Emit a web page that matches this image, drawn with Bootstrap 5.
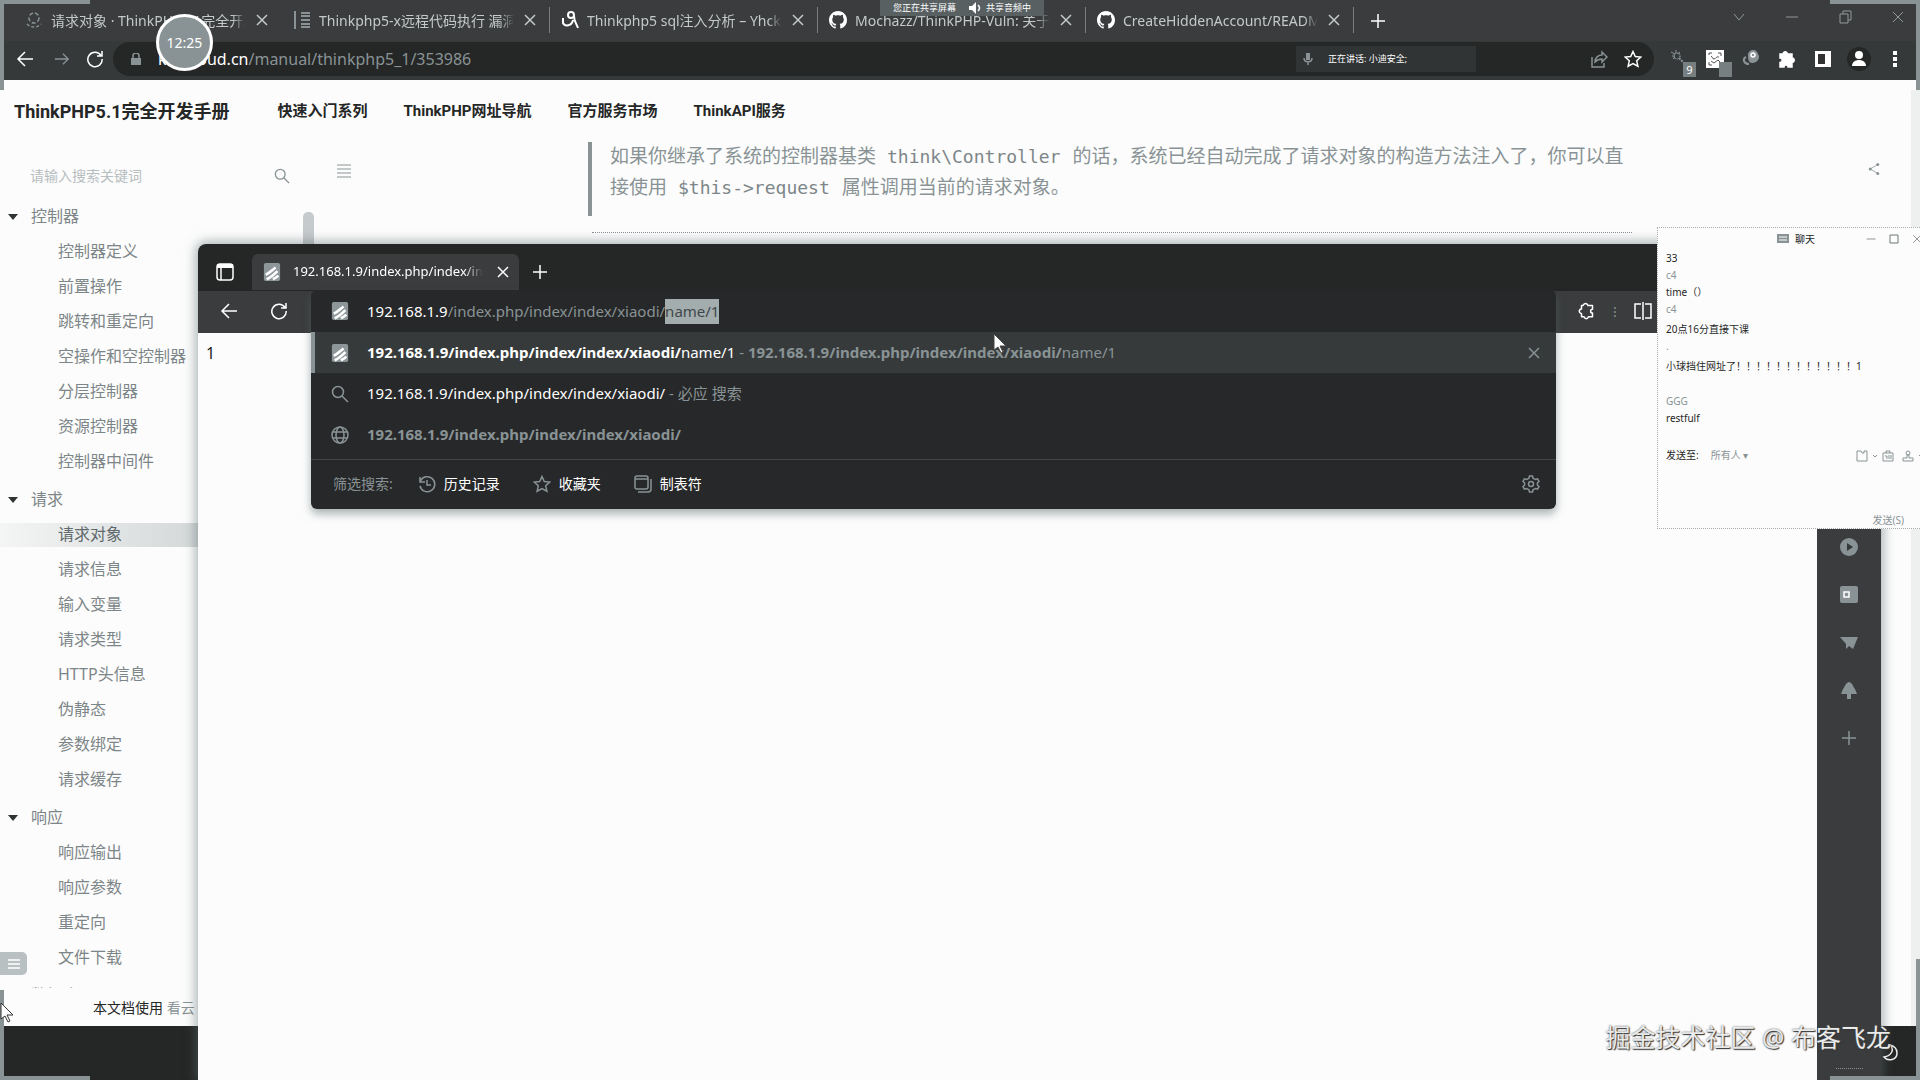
<!DOCTYPE html>
<html lang="zh-CN">
<head>
<meta charset="utf-8">
<meta name="viewport" content="width=device-width, initial-scale=1">
<title>请求对象 · ThinkPHP5.1完全开发手册</title>
<link href="https://cdn.jsdelivr.net/npm/bootstrap@5.3.0/dist/css/bootstrap.min.css" rel="stylesheet">
<style>
:root{--ink:#252626;--panel:#3a3c3d;--tone:#899395;--paper:#fcfcfc}
body{font-family:"Noto Sans","Noto Sans CJK SC",sans-serif;font-size:14px;color:var(--ink);background:var(--paper)}
svg{display:block;flex:none;fill:none;stroke:currentColor;stroke-width:1.5}
.solid{fill:currentColor;stroke:none}
.i12{width:12px;height:12px}.i16{width:16px;height:16px}.i18{width:18px;height:18px}.i20{width:20px;height:20px}
button.ico{background:none;border:0;padding:0;color:inherit;display:flex;align-items:center;justify-content:center;flex:none}
.dim,button.ico.dim{color:var(--tone)}
input.bare,textarea.bare,select.bare{border:0;outline:0;background:none;padding:0;border-radius:0;font:inherit;resize:none}
.desk{height:100vh;min-height:700px;overflow:hidden}
/* outer browser */
.tabstrip{height:41px;background:var(--panel);padding:0 14px 8px;color:#fff}
.btab{width:268px;height:26px;padding:0 11px;gap:8px;border-right:1px solid #777c7e;color:#c4c9ca}
.btab.noline{border-right-color:transparent}
.btab-title{width:196px;overflow:hidden;white-space:nowrap;-webkit-mask-image:linear-gradient(90deg,#000 93%,transparent)}
.winctl{color:#91989a;gap:37px}
.winctl svg,.chatctl svg{stroke-width:1}
.addrbar{height:39px;background:#35393a;padding:0 16px 3px;color:#fff}
.pill{height:34px;background:var(--ink);border-radius:17px;padding:0 12px 0 17px;margin:0 16px 0 9px;font-size:16px}
.pill input{color:var(--tone);width:320px}
.speaking{width:180px;height:26px;background:#303435;font-size:9px;padding:0 6px;gap:14px;margin-right:114px}
.exts{gap:18px}
.exts button{width:18px}
.extbadge{position:absolute;right:-8px;bottom:-9px;width:13px;height:15px;line-height:15px;font-size:11px;background:#777f81;color:#fff;text-align:center}
.dochead{height:62px;padding:0 14px;gap:36px;font-weight:700;font-family:Roboto,"Noto Sans CJK SC",sans-serif}
.dochead a{color:var(--ink);text-decoration:none;font-size:15px}
.dochead a.brand{font-size:18px;margin-right:12px}
/* manual */
.sidebar{width:320px}
.searchrow{height:59px;padding:10px 30px 0}
.searchrow input{width:220px;font-size:14px}
.searchrow input::placeholder{color:#b7bebf;opacity:1}
.tree{font-size:16px;overflow:hidden}
.tree ul{margin:0 0 3px;padding:0;list-style:none}
.tree a{display:block;line-height:35px;height:35px;padding-left:58px;color:#7c8688;text-decoration:none;white-space:nowrap}
.tree a.grp{padding-left:31px}
.tree a.grp::before{content:"";float:left;margin:15px 0 0 -23px;border:5px solid transparent;border-top:6px solid #303333;border-bottom:0}
.tree a.on{color:#606a6c;background:linear-gradient(90deg,#f4f5f5,#d4d8d9 198px) 0 6px/100% 24px no-repeat}
.docfoot{height:38px;padding-left:93px;flex:none;background:var(--paper)}
.taskbar{height:54px;background:var(--ink);flex:none}
.lead-tools{margin-top:21px}
.quote-wrap{margin-top:1px;height:75px;width:1044px;border-left:4px solid var(--tone)}
.quote{padding:0 0 0 18px;margin:-2px 0 0;font-size:19px;line-height:31px;color:var(--tone)}
.quote code{font-family:"DejaVu Sans Mono",monospace;font-size:18px;line-height:1;color:#7c8688;margin:0 12px 0 11px}
.rule{width:1040px;margin-left:4px;border-top:1px dotted var(--tone)}
/* inner browser window */
.edge{position:absolute;left:198px;top:244px;right:39px;bottom:0;border-radius:8px 8px 0 0;box-shadow:0 0 12px 2px rgba(90,105,108,.55);background:var(--paper)}
.edge-tabs{height:47px;background:var(--ink);border-radius:8px 8px 0 0;color:#fff;padding:8px 18px 0}
.edge-tab{width:267px;background:var(--panel);height:36px;border-radius:6px 6px 0 0;padding:0 8px 0 11px;gap:12px;margin:0 13px 0 18px;font-size:13px}
.edge-tab span{width:194px;overflow:hidden;white-space:nowrap;-webkit-mask-image:linear-gradient(90deg,#000 90%,transparent)}
.edge-bar{height:42px;background:var(--panel);color:#fff;padding:0 0 2px 22px}
.edge-tools{width:303px;gap:17px}
.omni{position:absolute;left:113px;right:325px;top:46px;background:#272829;color:#fff;border-radius:6px;box-shadow:0 5px 9px rgba(90,105,108,.5)}
.omni-row{height:41px;padding:0 14px 0 20px;gap:18px;white-space:nowrap;font-size:15px}
.omni-row.addr{height:42px}
.omni-row.hit{background:#363a3b;border-left:4px solid var(--tone);padding-left:16px}
.omni-row input{color:var(--tone);width:400px;line-height:25px;height:25px;caret-color:transparent}
.omni-row input::selection{background:#a4adae;color:#40484a}
.omni-foot{height:50px;border-top:1px solid #414546;margin-top:4px;padding:0 16px 2px 22px;gap:9px}
.rail{width:64px;background:var(--panel);color:var(--tone);padding-top:205px;gap:30px}
/* chat */
.chat{position:absolute;left:1657px;right:0;top:227px;height:302px;background:var(--paper);border:1px dotted #a5adae;border-right:0;font-size:10px;overflow:hidden}
.chat p{margin:0;height:17px;line-height:17px;padding-left:8px;white-space:nowrap}
.chat p.step{margin-top:3px}
.chat p.gap{margin-bottom:18px}
.chat select.bare{appearance:none;width:50px;color:var(--tone)}
.sendto{margin-top:21px}
.sendtools{gap:4px;margin-right:-4px}
.sendtools svg{stroke-width:1}
.chathead{height:22px;padding-left:119px;gap:6px}
.chatctl{gap:11px;color:#6d7678;margin-right:-3px}
/* floating */
.sharing{position:absolute;left:880px;top:0;width:164px;height:16px;background:#586062;color:#fff;font-size:9px;gap:5px}
.ball{position:absolute;left:156px;top:14px;width:57px;height:57px;border-radius:50%;border:3px solid #fff;background:var(--tone);color:#fff;font-size:14px}
.corner{position:absolute;width:90px;height:90px;border:0 solid var(--tone)}
.c1{left:0;top:0;border-width:4px 0 0 4px}.c2{right:0;top:0;border-width:4px 4px 0 0}
.c3{left:0;bottom:0;border-width:0 0 4px 4px}.c4{right:0;bottom:0;height:121px;border-width:0 4px 4px 0}
.pointer{position:absolute;stroke-width:1}
.pointer.main{left:993px;top:334px}.pointer.side{left:0;top:1003px}
.sidetool{position:absolute;left:0;top:952px;width:27px;height:23px;background:#b9c0c1;border-radius:0 5px 5px 0}
.stamp{position:absolute;right:29px;bottom:25px;font-size:25px;line-height:36px;color:#e9eaea;text-shadow:1px 1px 1px #333,0 0 2px #555;white-space:nowrap}
.moon{position:absolute;left:1882px;top:1044px;color:#eee}
.grip{position:absolute;left:1836px;top:1068px;width:27px;border-top:1px dotted var(--tone)}
.scrollbit{position:absolute;left:303px;top:212px;width:11px;height:32px;background:#c5cbcc;border-radius:5px 5px 0 0}
.outerscroll{position:absolute;right:0;top:90px;bottom:54px;width:9px;background:#eef0f0}
</style>
<script src="https://cdn.jsdelivr.net/npm/bootstrap@5.3.0/dist/js/bootstrap.bundle.min.js"></script>
</head>
<body>
<svg width="0" height="0" class="position-absolute">
<symbol id="x" viewBox="0 0 16 16"><path d="M3 3l10 10M13 3L3 13"/></symbol>
<symbol id="plus" viewBox="0 0 16 16"><path d="M8 1v14M1 8h14"/></symbol>
<symbol id="back" viewBox="0 0 18 18"><path d="M17 9H2M9 2L2 9l7 7"/></symbol>
<symbol id="reload" viewBox="0 0 18 18"><path d="M15 5.500A7.200 7.200 0 1 0 16.200 9M16 1v5h-5"/></symbol>
<symbol id="star" viewBox="0 0 18 18"><path d="M9 1.500l2.300 5 5.500.6-4.100 3.700 1.200 5.400L9 13.500l-4.900 2.700 1.200-5.400L1.200 7.100l5.500-.6z"/></symbol>
<symbol id="github" viewBox="0 0 16 16"><path fill="currentColor" stroke="none" d="M8 0C3.580 0 0 3.580 0 8c0 3.540 2.290 6.530 5.470 7.590.4.070.55-.17.55-.38 0-.19-.01-.82-.01-1.490-2.010.37-2.530-.49-2.690-.94-.09-.23-.48-.94-.82-1.130-.28-.15-.68-.52-.01-.53.63-.01 1.080.58 1.230.82.72 1.210 1.870.87 2.330.66.07-.52.28-.87.51-1.070-1.780-.2-3.640-.89-3.640-3.950 0-.87.31-1.590.82-2.150-.08-.2-.36-1.020.08-2.120 0 0 .67-.21 2.200.82.64-.18 1.320-.27 2-.27s1.360.09 2 .27c1.530-1.040 2.200-.82 2.200-.82.44 1.100.16 1.920.08 2.120.51.56.82 1.270.82 2.150 0 3.070-1.870 3.750-3.650 3.950.29.25.54.73.54 1.480 0 1.070-.01 1.930-.01 2.200 0 .21.15.46.55.38A8 8 0 0 0 16 8c0-4.420-3.580-8-8-8z"/></symbol>
<symbol id="fav" viewBox="0 0 18 20"><rect width="18" height="20" rx="2" fill="#8d9799" stroke="none"/><path stroke="#fff" stroke-width="3" d="M2 13C7 11 9 8 13 5M3 18c5-2 8-5 12-9M10 18c2-1 4-2 6-4"/></symbol>
<symbol id="glass" viewBox="0 0 18 18"><circle cx="7" cy="7" r="5.500"/><path d="M11 11l6 6"/></symbol>
<symbol id="puzzle" viewBox="0 0 18 18"><path d="M5 4a2.200 2.200 0 1 1 4.400 0H14v4a2.200 2.200 0 1 1 0 4.400V17h-4a2 2 0 0 0-4 0H2v-4.500a2.200 2.200 0 0 0 0-4.400V4z"/></symbol>
<symbol id="cog" viewBox="0 0 18 18"><path d="M5 3.500C6 1 9 .5 10 3.500h4.500v3.800c-2.500 0-2.500 3.800 0 3.800v3.600H10.500c-.8 2.600-3.700 2.600-4.500 0H3.500v-3C.5 11 .5 7.500 3.500 7V3.500z" stroke-linejoin="round"/></symbol>
<symbol id="minus" viewBox="0 0 16 16"><path d="M2 8h12"/></symbol>
<symbol id="max" viewBox="0 0 16 16"><path d="M3 5h8v9H3zM6 5V2h8v9h-3"/></symbol>
<symbol id="chev" viewBox="0 0 6 6"><path d="M1 2l2 2 2-2"/></symbol>
</svg>
<div class="desk position-relative d-flex flex-column">
  <header>
    <div class="tabstrip d-flex align-items-end">
      <div class="btab noline d-flex align-items-center"><svg class="i18 dim" viewBox="0 0 18 18"><circle cx="9" cy="7" r="5" stroke-dasharray="4 2"/><path d="M2 13c4 4 10 4 14 0" stroke-dasharray="3 2"/></svg><span class="btab-title">请求对象 · ThinkPHP5.1完全开发手册</span><button class="ico" aria-label="关闭标签页"><svg class="i16"><use href="#x"/></svg></button></div>
      <div class="btab d-flex align-items-center"><svg class="i18 dim" viewBox="0 0 18 18"><path d="M2 0v18M8 2h9M8 5h9M8 9h9M8 13h9M8 16h9" stroke-width="2"/></svg><span class="btab-title">Thinkphp5-x远程代码执行 漏洞</span><button class="ico" aria-label="关闭标签页"><svg class="i16"><use href="#x"/></svg></button></div>
      <div class="btab d-flex align-items-center"><svg class="i18 text-white" viewBox="0 0 18 18"><circle cx="10" cy="4" r="3" stroke-width="2"/><path d="M13 5c0 5 2 7 4 12M12 9c-1 6-8 7-10 3V7" stroke-width="2"/></svg><span class="btab-title">Thinkphp5 sql注入分析 – Yhck</span><button class="ico" aria-label="关闭标签页"><svg class="i16"><use href="#x"/></svg></button></div>
      <div class="btab d-flex align-items-center"><svg class="i18 text-white"><use href="#github"/></svg><span class="btab-title">Mochazz/ThinkPHP-Vuln: 关于</span><button class="ico" aria-label="关闭标签页"><svg class="i16"><use href="#x"/></svg></button></div>
      <div class="btab d-flex align-items-center"><svg class="i18 text-white"><use href="#github"/></svg><span class="btab-title">CreateHiddenAccount/README</span><button class="ico" aria-label="关闭标签页"><svg class="i16"><use href="#x"/></svg></button></div>
      <button class="ico ms-3 mb-1" aria-label="新标签页"><svg class="i16"><use href="#plus"/></svg></button>
      <div class="winctl d-flex ms-auto mb-2"><svg class="i16" viewBox="0 0 16 16"><path d="M3 5l5 6 5-6"/></svg><svg class="i16"><use href="#minus"/></svg><svg class="i16"><use href="#max"/></svg><svg class="i16"><use href="#x"/></svg></div>
    </div>
    <div class="addrbar d-flex align-items-center">
      <button class="ico" aria-label="后退"><svg class="i18"><use href="#back"/></svg></button>
      <button class="ico dim ms-3 ps-1" aria-label="前进"><svg class="i16" viewBox="0 0 18 18"><path d="M1 9h15M10 3l6 6-6 6"/></svg></button>
      <button class="ico ms-3" aria-label="刷新"><svg class="i18" stroke-width="2"><use href="#reload"/></svg></button>
      <div class="pill d-flex align-items-center flex-grow-1">
        <svg class="i12 dim me-3" viewBox="0 0 12 12"><path class="solid" d="M1 5h10v7H1z"/><path d="M3 6V3a3 3 0 0 1 6 0v3"/></svg>
        <label for="docurl">kancloud.cn</label><input id="docurl" class="bare" value="/manual/thinkphp5_1/353986">
        <div class="speaking d-flex align-items-center ms-auto"><svg class="i12 dim" viewBox="0 0 12 12"><path class="solid" d="M4 0h4v7H4z"/><path d="M2 5c0 5 8 5 8 0M6 9v3"/></svg><span>正在讲话: 小迪安全;</span></div>
        <button class="ico dim me-3" aria-label="分享"><svg class="i18" viewBox="0 0 18 18"><path d="M2 7v10h12v-4M5 12c0-5 4-7 7-7V2l5 5-5 5V9c-3 0-5 1-7 3z"/></svg></button>
        <button class="ico" aria-label="收藏"><svg class="i18"><use href="#star"/></svg></button>
      </div>
      <div class="exts d-flex align-items-center">
        <button class="ico position-relative dim" aria-label="扩展一"><svg class="i18" viewBox="0 0 18 18"><path d="M1 2l4 2M6 0v3M10 2L8 4M3 9l2-2M2 6h3" stroke-width="1"/><circle cx="7" cy="6" r="3" stroke-dasharray="1 1"/><path d="M9 8l5 5" stroke-dasharray="2 1" stroke-width="2"/></svg><span class="extbadge">9</span></button>
        <button class="ico position-relative" aria-label="扩展二"><svg class="i18" viewBox="0 0 18 18"><path class="solid" d="M0 0h18v18H0z"/><path stroke="#555" stroke-width="1" d="M3 5V3h3M12 3h3v3M3 12v3h3M5 6c2 1 1 3 3 3s2-3 5-2M5 11l3 2 4-3 3 3"/></svg><span class="extbadge"></span></button>
        <button class="ico dim" aria-label="扩展三"><svg class="i18" viewBox="0 0 18 18"><path class="solid" d="M6 6a5 5 0 0 1 10-2c3 4-1 9-6 9-3 0-4-3-4-7z"/><circle cx="11" cy="5" r="2" stroke="#fff"/><path d="M4 7c-4 2-2 7 3 7" stroke-width="2"/></svg></button>
        <button class="ico" aria-label="扩展程序"><svg class="i18"><g fill="currentColor"><use href="#puzzle"/></g></svg></button>
        <button class="ico" aria-label="侧边栏"><svg class="i16" viewBox="0 0 16 16"><path class="solid" d="M0 0h16v16H0z"/><path fill="#333" stroke="none" d="M3 3h7v10H3z"/></svg></button>
        <button class="ico" aria-label="个人资料"><svg class="i20" viewBox="0 0 20 20" overflow="visible"><circle cx="10" cy="10" r="12" fill="#252626" stroke="none"/><circle class="solid" cx="10" cy="6" r="4"/><path class="solid" d="M3 17c0-8 14-8 14 0z"/></svg></button>
        <button class="ico" aria-label="菜单"><svg class="i18" viewBox="0 0 18 18"><path class="solid" d="M7 1h4v4H7zM7 7h4v4H7zM7 13h4v4H7z"/></svg></button>
      </div>
    </div>
    <nav class="dochead d-flex align-items-center"><a class="brand" href="#">ThinkPHP5.1完全开发手册</a><a href="#">快速入门系列</a><a href="#">ThinkPHP网址导航</a><a href="#">官方服务市场</a><a href="#">ThinkAPI服务</a></nav>
  </header>
  <main class="d-flex flex-grow-1 overflow-hidden">
    <aside class="sidebar d-flex flex-column flex-shrink-0">
      <label class="searchrow d-flex align-items-center justify-content-between"><input class="bare" type="search" placeholder="请输入搜索关键词"><svg class="i16 dim"><use href="#glass"/></svg></label>
      <nav class="tree flex-grow-1">
        <ul><li><a class="grp" href="#">控制器</a></li><li><a href="#">控制器定义</a></li><li><a href="#">前置操作</a></li><li><a href="#">跳转和重定向</a></li><li><a href="#">空操作和空控制器</a></li><li><a href="#">分层控制器</a></li><li><a href="#">资源控制器</a></li><li><a href="#">控制器中间件</a></li></ul>
        <ul><li><a class="grp" href="#">请求</a></li><li><a class="on" href="#">请求对象</a></li><li><a href="#">请求信息</a></li><li><a href="#">输入变量</a></li><li><a href="#">请求类型</a></li><li><a href="#">HTTP头信息</a></li><li><a href="#">伪静态</a></li><li><a href="#">参数绑定</a></li><li><a href="#">请求缓存</a></li></ul>
        <ul><li><a class="grp" href="#">响应</a></li><li><a href="#">响应输出</a></li><li><a href="#">响应参数</a></li><li><a href="#">重定向</a></li><li><a href="#">文件下载</a></li></ul>
        <ul><li><a class="grp" href="#">数据库</a></li></ul>
      </nav>
      <div class="docfoot d-flex align-items-center">本文档使用&nbsp;<a href="#" class="dim text-decoration-none">看云</a></div>
    </aside>
    <section class="d-flex flex-grow-1 align-items-start">
      <button class="ico dim ms-3 lead-tools" aria-label="目录"><svg class="i16" viewBox="0 0 16 16"><path d="M1 2h14M1 6h14M1 10h14M1 14h14" stroke-width="1"/></svg></button>
      <article class="ms-auto me-auto">
        <div class="quote-wrap mb-3"><blockquote class="quote">如果你继承了系统的控制器基类<code>think\Controller</code>的话，系统已经自动完成了请求对象的构造方法注入了，你可以直接使用<code>$this-&gt;request</code>属性调用当前的请求对象。</blockquote></div>
        <div class="rule"></div>
      </article>
      <button class="ico dim lead-tools me-4 pe-3" aria-label="分享文档"><svg class="i12" viewBox="0 0 16 16"><path d="M13 2L3 8l10 6" stroke-width="1"/><circle class="solid" cx="13" cy="2" r="2"/><circle class="solid" cx="3" cy="8" r="2"/><circle class="solid" cx="13" cy="14" r="2"/></svg></button>
    </section>
  </main>
  <footer class="taskbar"></footer>
  <div class="scrollbit"></div><div class="outerscroll"></div>
  <div class="sidetool text-white d-flex align-items-center justify-content-center"><svg class="i16" viewBox="0 0 16 16"><path d="M2 4h12M2 8h12M2 12h12"/></svg></div>

  <section class="edge d-flex flex-column">
    <div class="edge-tabs d-flex align-items-center">
      <svg class="i18" viewBox="0 0 18 18"><rect x="1" y="1" width="16" height="16" rx="3"/><path d="M1 3h16" stroke-width="4"/><path d="M5 4v13"/></svg>
      <div class="edge-tab d-flex align-items-center"><svg class="i18"><use href="#fav"/></svg><span>192.168.1.9/index.php/index/index/xiaodi</span><button class="ico" aria-label="关闭标签页"><svg class="i16"><use href="#x"/></svg></button></div>
      <button class="ico" aria-label="新建标签页"><svg class="i16"><use href="#plus"/></svg></button>
    </div>
    <div class="edge-bar d-flex align-items-center">
      <button class="ico" aria-label="后退"><svg class="i18"><use href="#back"/></svg></button>
      <button class="ico ms-4 ps-2" aria-label="刷新"><svg class="i18"><use href="#reload"/></svg></button>
      <div class="edge-tools d-flex align-items-center ms-auto"><button class="ico" aria-label="扩展"><svg class="i18"><use href="#cog"/></svg></button><span class="dim">⁝</span><button class="ico" aria-label="分屏"><svg class="i18" viewBox="0 0 18 18"><path d="M7 2H1v14h6M11 2h6v14h-6M9 0v18"/></svg></button></div>
    </div>
    <div class="d-flex flex-grow-1">
      <div class="flex-grow-1 px-2 fs-6 pt-2">1</div>
      <aside class="rail d-flex flex-column align-items-center">
        <svg class="i18" viewBox="0 0 18 18"><circle class="solid" cx="9" cy="9" r="9"/><path fill="#343839" stroke="none" d="M7 5l6 4-6 4z"/></svg>
        <svg class="i18" viewBox="0 0 18 18"><rect class="solid" width="18" height="17" rx="2"/><rect x="4" y="6" width="5" height="5" stroke="#fff"/></svg>
        <svg class="i18" viewBox="0 0 18 18"><path class="solid" d="M0 3h18l-5 12-4-3-3 3v-5z"/></svg>
        <svg class="i18" viewBox="0 0 18 18"><path class="solid" d="M9 0c4 1 4 5 6 7l2 5h-6v5H7v-5H1l2-5c2-2 2-6 6-7z"/></svg>
        <button class="ico" aria-label="添加"><svg class="i16"><use href="#plus"/></svg></button>
      </aside>
    </div>
    <div class="omni">
      <div class="omni-row addr d-flex align-items-center"><svg class="i18"><use href="#fav"/></svg><div class="d-flex align-items-center"><label for="edgeurl">192.168.1.9</label><input id="edgeurl" class="bare" value="/index.php/index/index/xiaodi/name/1"></div></div>
      <div class="omni-row hit d-flex align-items-center"><svg class="i18"><use href="#fav"/></svg><div><b>192.168.1.9/index.php/index/index/xiaodi/</b>name/1 <span class="dim">- <b>192.168.1.9/index.php/index/index/xiaodi/</b>name/1</span></div><button class="ico dim ms-auto" aria-label="删除建议"><svg class="i16"><use href="#x"/></svg></button></div>
      <div class="omni-row d-flex align-items-center"><svg class="i18 dim"><use href="#glass"/></svg><div>192.168.1.9/index.php/index/index/xiaodi/ <span class="dim">- 必应 搜索</span></div></div>
      <div class="omni-row d-flex align-items-center dim"><svg class="i18" viewBox="0 0 18 18"><circle cx="9" cy="9" r="8"/><ellipse cx="9" cy="9" rx="4" ry="8"/><path d="M2 6h14M2 12h14"/></svg><b>192.168.1.9/index.php/index/index/xiaodi/</b></div>
      <div class="omni-foot d-flex align-items-center"><span class="dim me-3">筛选搜索:</span>
        <button class="ico gap-2 me-4" type="button"><svg class="i18 dim" viewBox="0 0 18 18"><path d="M2 2v5h5M2.500 6A7.500 7.500 0 1 1 2 11M9 5v5h4"/></svg>历史记录</button>
        <button class="ico gap-2 me-4" type="button"><svg class="i18 dim"><use href="#star"/></svg>收藏夹</button>
        <button class="ico gap-2" type="button"><svg class="i18 dim" viewBox="0 0 18 18"><rect x="1" y="1" width="13" height="13" rx="2"/><path d="M1 4h13M4 17h10c2 0 3-1 3-3V4"/></svg>制表符</button>
        <button class="ico dim ms-auto" aria-label="设置"><svg class="i18" viewBox="0 0 18 18"><path d="M7.500 1h3l.6 2.300 2.200 1.200 2.300-.7 1.400 2.600L15.400 8v2l1.600 1.600-1.400 2.600-2.300-.7-2.200 1.200-.6 2.300h-3l-.6-2.300-2.200-1.200-2.300.7L1 11.600 2.600 10V8L1 6.400l1.400-2.600 2.300.7 2.200-1.200z"/><circle cx="9" cy="9" r="2.500"/></svg></button>
      </div>
    </div>
  </section>

  <section class="chat d-flex flex-column">
    <div class="chathead d-flex align-items-center"><svg class="i12 dim" viewBox="0 0 12 12"><path class="solid" d="M0 1h12v9H0z"/><path stroke="#fff" stroke-width="1" d="M2 4h8M2 7h8"/></svg><span>聊天</span><div class="chatctl d-flex ms-auto"><svg class="i12"><use href="#minus"/></svg><svg class="i12" viewBox="0 0 12 12"><path d="M2 2h8v8H2z"/></svg><svg class="i12"><use href="#x"/></svg></div></div>
    <p>33</p><p class="dim">c4</p><p>time（）</p><p class="dim">c4</p><p class="step">20点16分直接下课</p><p class="dim">.</p><p class="step gap">小球挡住网址了！！！！！！！！！！！！1</p><p class="dim">GGG</p><p>restfulf</p>
    <div class="sendto d-flex align-items-center ps-2"><label for="to" class="me-2 pe-1">发送至:</label><select id="to" class="bare"><option>所有人 ▾</option></select>
      <div class="sendtools d-flex align-items-center ms-auto dim"><svg class="i12" viewBox="0 0 12 12"><path d="M1 1h4l1 2h2V1h3v10H1z"/></svg><svg width="6" height="6"><use href="#chev"/></svg><svg class="i12" viewBox="0 0 12 12"><path d="M1 3h10v8H1zM4 3V1h4v2M3 6h2v3M7 5v4M9 5v4"/></svg><svg class="i12 ms-1" viewBox="0 0 12 12"><circle cx="6" cy="3" r="2"/><path d="M1 11h10V8H7V5H5v3H1z"/></svg><svg width="6" height="6"><use href="#chev"/></svg></div></div>
    <textarea class="bare flex-grow-1" aria-label="消息"></textarea>
    <button class="ico dim align-self-end me-3" type="button">发送(S)</button>
  </section>

  <div class="sharing d-flex align-items-center justify-content-center"><span>您正在共享屏幕</span><svg class="i12 ms-2" viewBox="0 0 12 12"><path class="solid" d="M0 4h3l4-4v12L3 8H0z"/><path d="M9 3c2 2 2 4 0 6"/></svg><span>共享音频中</span></div>
  <div class="ball d-flex align-items-center justify-content-center">12:25</div>
  <div class="corner c1"></div><div class="corner c2"></div><div class="corner c3"></div><div class="corner c4"></div>
  <svg class="pointer main" width="14" height="20" viewBox="0 0 14 20"><path fill="#fff" stroke="#444" d="M1 0v16l4-3 3 6 2-1-3-6h6z"/></svg>
  <svg class="pointer side" width="14" height="20" viewBox="0 0 14 20"><path fill="#fff" stroke="#333" d="M1 0v16l4-3 3 6 2-1-3-6h6z"/></svg>
  <svg class="moon i18" viewBox="0 0 18 18"><path d="M8 1c5 5 1 11-6 12 4 5 13 3 13-4 0-4-3-7-7-8z"/></svg>
  <div class="grip"></div>
  <div class="stamp">掘金技术社区 @ 布客飞龙</div>
</div>
<script>
const url=document.getElementById('edgeurl');
url.focus({preventScroll:true});
url.setSelectionRange(url.value.indexOf('name/'),url.value.length);
</script>
</body>
</html>
